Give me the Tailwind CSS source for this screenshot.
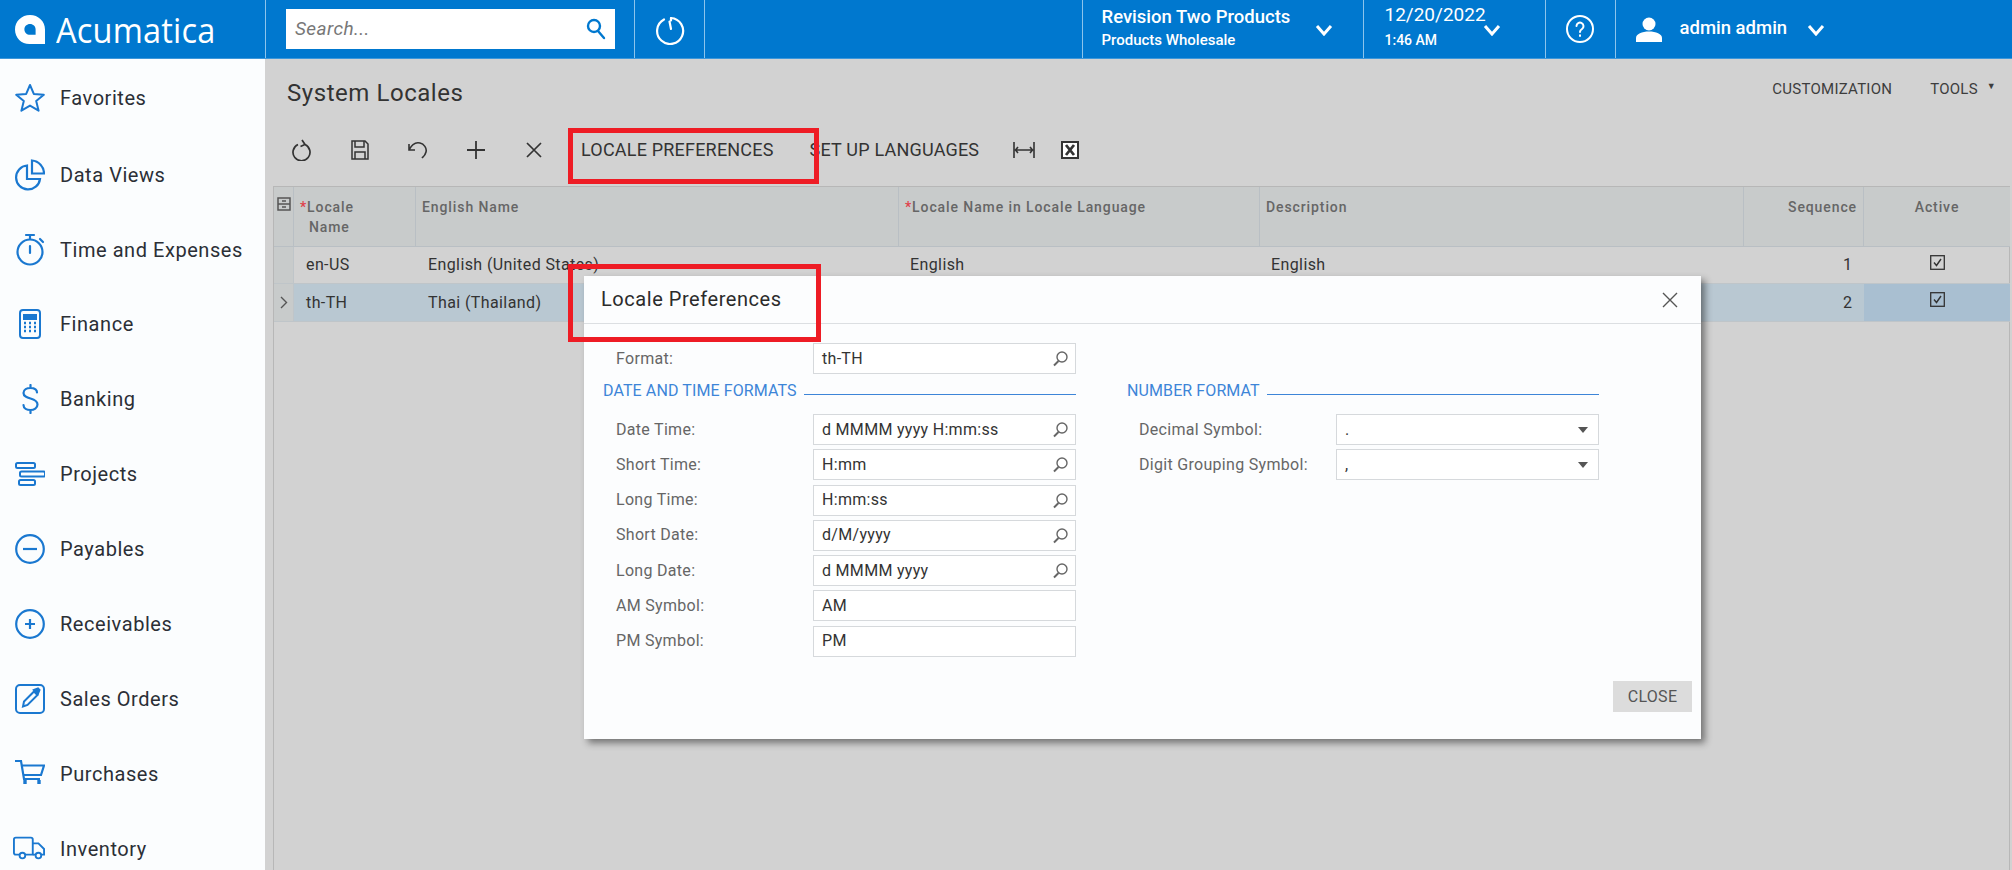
<!DOCTYPE html>
<html><head><meta charset="utf-8"><script src="https://cdn.jsdelivr.net/npm/@tailwindcss/browser@4"></script></head>
<body class="m-0 overflow-hidden">
<div class="relative w-[2012px] h-[870px] overflow-hidden flex flex-col bg-[#d2d2d2] font-['Roboto',sans-serif] text-[#333]">
  <!-- top bar -->
  <header class="h-[59px] shrink-0 flex bg-[#0078cf] text-white border-b border-[#3d97da]">
    <div class="w-[266px] shrink-0 flex items-center pl-[15px] gap-[11px] border-r border-[#8cc4ec]">
      <svg width="30" height="29" viewBox="0 0 30 29"><path fill="#fff" fill-rule="evenodd" d="M15 0C6.7 0 0 6.4 0 14.4 0 22.6 6.4 29 14.4 29H30V14.4C30 6.4 23.3 0 15 0Zm0 9c3.2 0 5.6 2.4 5.6 5.4v5.4h-5.6c-3.2 0-5.6-2.4-5.6-5.4S11.800 9 15 9Z"/></svg>
      <span class="text-[35px] leading-none tracking-[0.2px] font-['Open_Sans',sans-serif] scale-x-[0.93] origin-left">Acumatica</span>
    </div>
    <div class="w-[369px] shrink-0 flex items-center pl-[20px] border-r border-[#8cc4ec]">
      <div class="w-[329px] h-[40px] bg-white flex items-center justify-between px-[9px] text-[#777]">
        <span class="italic text-[19px] tracking-[0.4px]">Search...</span>
        <svg width="20" height="22" viewBox="0 0 20 22" fill="none" stroke="#0078cf" stroke-width="2.400"><circle cx="8" cy="8" r="6"/><path d="m12 13 6 7" stroke-linecap="round"/></svg>
      </div>
    </div>
    <div class="w-[70px] shrink-0 flex items-center justify-center border-r border-[#8cc4ec]">
      <svg width="32" height="32" viewBox="0 0 32 32" fill="none" stroke="#fff" stroke-width="2.200" stroke-linecap="round"><path d="M10 6.500a13 13 0 1 0 7-1.500"/><path d="M17 5v2.500M15.500 8.500 17 16"/></svg>
    </div>
    <div class="flex-1 border-r border-[#8cc4ec]"></div>
    <div class="w-[281px] shrink-0 flex items-center pl-[19px] border-r border-[#8cc4ec]">
      <div class="w-[202px] flex flex-col">
        <span class="text-[18.500px] leading-[22px] -mt-[3px] font-medium whitespace-nowrap">Revision Two Products</span>
        <span class="text-[15px] leading-[20px] mt-[2px] font-medium whitespace-nowrap">Products Wholesale</span>
      </div>
      <svg class="ml-[11px] mt-[2px]" width="18" height="12" viewBox="0 0 18 12" fill="none" stroke="#fff" stroke-width="3"><path d="m2 2 7 8 7-8"/></svg>
    </div>
    <div class="w-[182px] shrink-0 flex items-center pl-[21px] border-r border-[#8cc4ec]">
      <div class="w-[93px] flex flex-col">
        <span class="text-[19px] leading-[22px] -mt-[6px] whitespace-nowrap">12/20/2022</span>
        <span class="text-[14px] leading-[18px] mt-[5px] font-medium whitespace-nowrap">1:46 AM</span>
      </div>
      <svg class="ml-[5px] mt-[2px]" width="18" height="12" viewBox="0 0 18 12" fill="none" stroke="#fff" stroke-width="3"><path d="m2 2 7 8 7-8"/></svg>
    </div>
    <div class="w-[70px] shrink-0 flex items-center justify-center border-r border-[#8cc4ec]">
      <svg width="30" height="30" viewBox="0 0 30 30" fill="none" stroke="#fff" stroke-width="2"><circle cx="15" cy="15" r="13"/><path d="M11.500 12a3.500 3.500 0 1 1 5.500 3c-1.300.9-2 1.500-2 3" stroke-linecap="round"/><path d="M15 20.500v2.200"/></svg>
    </div>
    <div class="flex-1 flex items-center pl-[20px]">
      <svg width="26" height="25" viewBox="0 0 26 25" fill="#fff"><circle cx="13" cy="7" r="6.500"/><path d="M0 25v-4c0-4 6-6.500 13-6.500S26 17 26 21v4Z"/></svg>
      <span class="ml-[18px] text-[18.500px] font-medium whitespace-nowrap">admin admin</span>
      <svg class="ml-[20px] mt-[2px]" width="18" height="12" viewBox="0 0 18 12" fill="none" stroke="#fff" stroke-width="3"><path d="m2 2 7 8 7-8"/></svg>
    </div>
  </header>
  <div class="flex-1 flex min-h-0">
    <!-- sidebar -->
    <aside class="w-[265px] shrink-0 bg-[#fbfdfe] flex flex-col text-[20px] tracking-[0.55px] text-[#2b2f36] overflow-hidden">
      <div class="h-[77px] shrink-0 flex items-center pl-[15px] gap-[15px]"><svg class="w-[30px] h-[30px]" viewBox="0 0 30 30" fill="none" stroke="#1a78d0" stroke-width="2" stroke-linejoin="round"><path d="m15 2 3.800 8.900 10 .9-7.600 6.300 2.400 9.600L15 22.600l-8.600 5.100 2.400-9.600-7.600-6.300 10-.9Z"/></svg><span>Favorites</span></div>
      <div class="h-[77px] shrink-0 flex items-center pl-[15px] gap-[15px]"><svg class="w-[30px] h-[32px]" viewBox="0 0 30 32" fill="none" stroke="#1a78d0" stroke-width="2.200"><path d="M12 6.500A12 12 0 1 0 25 20H12Z"/><path d="M17 1.500v13h12A13 13 0 0 0 17 1.500Z"/></svg><span>Data Views</span></div>
      <div class="h-[73px] shrink-0 flex items-center pl-[15px] gap-[15px]"><svg class="w-[30px] h-[33px]" viewBox="0 0 30 33" fill="none" stroke="#1a78d0" stroke-width="2.200" stroke-linecap="round"><circle cx="15" cy="19" r="12.500"/><path d="M11 2h8M15 2v4M25 6l3 3M15 13v7"/></svg><span>Time and Expenses</span></div>
      <div class="h-[75px] shrink-0 flex items-center pl-[15px] gap-[15px]"><svg class="w-[30px] h-[30px]" viewBox="0 0 30 30" fill="none" stroke="#1a78d0" stroke-width="2"><rect x="5" y="1" width="20" height="28" rx="3"/><path d="M9 6h12v4H9z" fill="#1a78d0"/><path d="M9 14h2M14 14h2M19 14h2M9 18h2M14 18h2M19 18h2M9 22h2M14 22h2M19 22h2" stroke-width="2.400"/></svg><span>Finance</span></div>
      <div class="h-[75px] shrink-0 flex items-center pl-[15px] gap-[15px]"><svg class="w-[30px] h-[30px]" viewBox="0 0 30 30" fill="none" stroke="#1a78d0" stroke-width="2.200" stroke-linecap="round"><path d="M22 8.500C22 5.500 19 4 15.500 4S8.500 5.500 8.500 9s3.500 4.500 7 5.500 7 2.500 7 6-3.500 5.500-7 5.500-7-1.500-7-5M15.500 1v3M15.500 26v3"/></svg><span>Banking</span></div>
      <div class="h-[75px] shrink-0 flex items-center pl-[15px] gap-[15px]"><svg class="w-[30px] h-[26px]" viewBox="0 0 30 26" fill="none" stroke="#1a78d0" stroke-width="2"><rect x="1" y="2" width="19" height="5" rx="1.500"/><rect x="5" y="10.500" width="25" height="5" rx="1.500"/><rect x="4" y="19" width="16" height="5" rx="1.500"/></svg><span>Projects</span></div>
      <div class="h-[75px] shrink-0 flex items-center pl-[15px] gap-[15px]"><svg class="w-[30px] h-[30px]" viewBox="0 0 30 30" fill="none" stroke="#1a78d0" stroke-width="2.200"><circle cx="15" cy="15" r="13.800"/><path d="M8 15h14"/></svg><span>Payables</span></div>
      <div class="h-[75px] shrink-0 flex items-center pl-[15px] gap-[15px]"><svg class="w-[30px] h-[30px]" viewBox="0 0 30 30" fill="none" stroke="#1a78d0" stroke-width="2.200"><circle cx="15" cy="15" r="13.800"/><path d="M10 15h10M15 10v10"/></svg><span>Receivables</span></div>
      <div class="h-[75px] shrink-0 flex items-center pl-[15px] gap-[15px]"><svg class="w-[30px] h-[30px]" viewBox="0 0 30 30" fill="none" stroke="#1a78d0" stroke-width="2"><rect x="1" y="1" width="28" height="28" rx="4"/><path d="M8 22.500l1-5L19 7.500l3.500 3.500L12.500 21Z"/><path d="m19 6 4-1.500 1.500 1.500-1.500 3.500Z" fill="#1a78d0"/></svg><span>Sales Orders</span></div>
      <div class="h-[75px] shrink-0 flex items-center pl-[15px] gap-[15px]"><svg class="w-[30px] h-[30px]" viewBox="0 0 30 30" fill="none" stroke="#1a78d0" stroke-width="2.200"><path d="M0 2h6l3 18h16M7 6.500h22l-3 9.500H9"/><path d="M10 21v4M24 21v4" stroke-width="3.400"/></svg><span>Purchases</span></div>
      <div class="h-[75px] shrink-0 flex items-center pl-[13px] gap-[15px]"><svg class="w-[32px] h-[25px]" viewBox="0 0 34 25" fill="none" stroke="#1a78d0" stroke-width="2"><path d="M7 19H3a2 2 0 0 1-2-2V3a2 2 0 0 1 2-2h16a2 2 0 0 1 2 2v16H13"/><path d="M21 7h6l6 6v6h-3M24 19h-3"/><circle cx="10" cy="20" r="3"/><circle cx="27" cy="20" r="3"/></svg><span>Inventory</span></div>
    </aside>
    <!-- main -->
    <main class="flex-1 min-w-0 pl-[8px] pr-[2px] flex flex-col">
      <div class="h-[68px] shrink-0 flex justify-between pl-[14px] pr-[14px]">
        <h1 class="text-[24px] leading-[68px] tracking-[0.55px] font-normal">System Locales</h1>
        <div class="flex gap-[38px] text-[15px] tracking-[0.25px] pt-[19px] text-[#3d3d3d]"><span>CUSTOMIZATION</span><span class="flex gap-[9px]">TOOLS<span class="text-[9px] mt-[2px]">▼</span></span></div>
      </div>
      <div class="h-[46px] shrink-0 flex items-center text-[#333]">
        <div class="w-[58px] flex justify-center ml-[0px]"><svg width="20" height="22" viewBox="0 0 20 22" fill="none" stroke="#333" stroke-width="1.700"><path d="M6 5.500a8.500 8.500 0 1 0 7 0M10 1l3 4.500-4.500 2"/></svg></div>
        <div class="w-[58px] flex justify-center"><svg width="20" height="20" viewBox="0 0 20 20" fill="none" stroke="#333" stroke-width="1.500"><path d="M2 1h13l3 3v15H2Z"/><path d="M5 1v6h9V1M5 19v-7h10v7"/></svg></div>
        <div class="w-[58px] flex justify-center"><svg width="22" height="18" viewBox="0 0 22 18" fill="none" stroke="#333" stroke-width="1.600"><path d="M2 9c3-6 7-8 11-7s7 5 6 9-3 5-4 6M2 3v6h6"/></svg></div>
        <div class="w-[58px] flex justify-center"><svg width="20" height="20" viewBox="0 0 20 20" stroke="#333" stroke-width="1.800"><path d="M10 1v18M1 10h18"/></svg></div>
        <div class="w-[57px] flex justify-center"><svg width="16" height="16" viewBox="0 0 16 16" stroke="#333" stroke-width="1.700"><path d="m1 1 14 14M15 1 1 15"/></svg></div>
        <span class="ml-[19px] -mt-[1px] text-[18px] tracking-[0.2px] whitespace-nowrap">LOCALE PREFERENCES</span>
        <span class="ml-[36px] -mt-[1px] text-[18px] tracking-[0.2px] whitespace-nowrap">SET UP LANGUAGES</span>
        <svg class="ml-[34px]" width="22" height="16" viewBox="0 0 22 16" fill="none" stroke="#333" stroke-width="1.600"><path d="M1 0v16M21 0v16M3 8h16M5 5 2.500 8 5 11M17 5l2.500 3L17 11"/></svg>
        <svg class="ml-[26px]" width="18" height="18" viewBox="0 0 18 18"><rect x="1" y="1" width="16" height="16" fill="#fff" stroke="#333" stroke-width="2"/><path d="m5 4 8 10M13 4 5 14" stroke="#333" stroke-width="2.800"/></svg>
      </div>
      <div class="h-[13px] shrink-0"></div>
      <div class="flex-1 border border-[#b7b7b7] border-b-0 min-h-0">
        <div class="grid grid-cols-[20px_122px_483px_361px_484px_120px_146px] grid-rows-[60px_37px_38px] text-[#333]">
          <div class="bg-[#c8cbcb] border-r border-b border-[#b9bfc4] flex justify-center pt-[10px]"><svg width="14" height="14" viewBox="0 0 14 14" fill="none" stroke="#555" stroke-width="1.500"><rect x="1" y="1" width="12" height="12"/><path d="M1 7h12M5 4h4M5 10h4"/></svg></div>
          <div class="bg-[#c8cbcb] border-r border-b border-[#b9bfc4] pl-[6px] pt-[10px] text-[14px] leading-[20px] tracking-[0.9px] font-medium text-[#666]"><span class="text-[#e0404a]">*</span>Locale<br><span class="pl-[9px]">Name</span></div>
          <div class="bg-[#c8cbcb] border-r border-b border-[#b9bfc4] pl-[6px] pt-[10px] text-[14px] leading-[20px] tracking-[0.9px] font-medium text-[#666]">English Name</div>
          <div class="bg-[#c8cbcb] border-r border-b border-[#b9bfc4] pl-[6px] pt-[10px] text-[14px] leading-[20px] tracking-[0.9px] font-medium text-[#666]"><span class="text-[#e0404a]">*</span>Locale Name in Locale Language</div>
          <div class="bg-[#c8cbcb] border-r border-b border-[#b9bfc4] pl-[6px] pt-[10px] text-[14px] leading-[20px] tracking-[0.9px] font-medium text-[#666]">Description</div>
          <div class="bg-[#c8cbcb] border-r border-b border-[#b9bfc4] pr-[6px] pt-[10px] text-right text-[14px] leading-[20px] tracking-[0.9px] font-medium text-[#666]">Sequence</div>
          <div class="bg-[#c8cbcb] border-b border-[#b9bfc4] pt-[10px] text-center text-[14px] leading-[20px] tracking-[0.9px] font-medium text-[#666]">Active</div>

          <div class="bg-[#c8cbcb] border-r border-b border-[#bfc5c9]"></div>
          <div class="border-b border-[#bfc5c9] pl-[12px] flex items-center text-[16px] tracking-[0.4px]">en-US</div>
          <div class="border-b border-[#bfc5c9] pl-[12px] flex items-center text-[16px] tracking-[0.4px]">English (United States)</div>
          <div class="border-b border-[#bfc5c9] pl-[11px] flex items-center text-[16px] tracking-[0.4px]">English</div>
          <div class="border-b border-[#bfc5c9] pl-[11px] flex items-center text-[16px] tracking-[0.4px]">English</div>
          <div class="border-b border-[#bfc5c9] pr-[12px] flex items-center justify-end text-[16px]">1</div>
          <div class="border-b border-[#bfc5c9] pl-[66px] pt-[8px]"><svg width="15" height="15" viewBox="0 0 15 15" fill="none" stroke="#333"><rect x=".7" y=".7" width="13.600" height="13.600" stroke-width="1.300"/><path d="m4 7.500 2.500 3 4.500-6.500" stroke-width="1.400"/></svg></div>

          <div class="bg-[#c8cbcb] border-r border-b border-[#bfc5c9] flex items-center justify-center"><svg width="8" height="13" viewBox="0 0 8 13" fill="none" stroke="#555" stroke-width="1.400"><path d="m1 1 5.500 5.500L1 12"/></svg></div>
          <div class="bg-[#b9c8d2] border-b border-[#bfc5c9] pl-[12px] flex items-center text-[16px] tracking-[0.4px]">th-TH</div>
          <div class="bg-[#b9c8d2] border-b border-[#bfc5c9] pl-[12px] flex items-center text-[16px] tracking-[0.4px]">Thai (Thailand)</div>
          <div class="bg-[#b9c8d2] border-b border-[#bfc5c9]"></div>
          <div class="bg-[#b9c8d2] border-b border-[#bfc5c9]"></div>
          <div class="bg-[#b9c8d2] border-b border-[#bfc5c9] pr-[12px] flex items-center justify-end text-[16px]">2</div>
          <div class="bg-[#a9bfd1] border-b border-[#bfc5c9] pl-[66px] pt-[8px]"><svg width="15" height="15" viewBox="0 0 15 15" fill="none" stroke="#333"><rect x=".7" y=".7" width="13.600" height="13.600" stroke-width="1.300"/><path d="m4 7.500 2.500 3 4.500-6.500" stroke-width="1.400"/></svg></div>
        </div>
      </div>
    </main>
  </div>

  <!-- modal -->
  <section class="absolute left-[584px] top-[276px] w-[1117px] h-[463px] bg-[#fcfdfe] shadow-[4px_4px_7px_rgba(0,0,0,0.45)] flex flex-col">
    <div class="h-[48px] shrink-0 flex items-center justify-between border-b border-[#dcdfe2] pl-[17px] pr-[23px]">
      <span class="text-[20px] tracking-[0.55px] -mt-[1px] text-[#2b2b2b]">Locale Preferences</span>
      <svg width="16" height="16" viewBox="0 0 16 16" stroke="#555" stroke-width="1.400"><path d="m1 1 14 14M15 1 1 15"/></svg>
    </div>
    <div class="flex-1 relative min-h-0 text-[16px] tracking-[0.3px]">
      <div class="flex gap-[51px] pl-[19px] pt-[19px]">
        <div class="w-[473px] flex flex-col">
          <div class="flex items-center h-[31px] pl-[13px] text-[#666]"><span class="w-[197px]">Format:</span>
            <div class="w-[263px] h-[31px] border border-[#d6d9dc] bg-white flex items-center justify-between pl-[8px] pr-[6px] text-[#333]"><span>th-TH</span><svg width="17" height="17" viewBox="0 0 17 17" fill="none" stroke="#666" stroke-width="1.400"><circle cx="10" cy="7" r="5"/><path d="m6.500 11-4.500 4.500" stroke-width="2"/></svg></div></div>
          <div class="flex items-center gap-[7px] h-[40px] text-[#3d85d8]"><span class="whitespace-nowrap tracking-[0.1px] -mt-[7px]">DATE AND TIME FORMATS</span><div class="flex-1 h-px bg-[#3d85d8] mr-[0px] ml-[0px]"></div></div>
          <div class="flex flex-col gap-[4.300px]">
            <div class="flex items-center h-[31px] pl-[13px] text-[#666]"><span class="w-[197px]">Date Time:</span><div class="w-[263px] h-[31px] border border-[#d6d9dc] bg-white flex items-center justify-between pl-[8px] pr-[6px] text-[#333]"><span>d MMMM yyyy H:mm:ss</span><svg width="17" height="17" viewBox="0 0 17 17" fill="none" stroke="#666" stroke-width="1.400"><circle cx="10" cy="7" r="5"/><path d="m6.500 11-4.500 4.500" stroke-width="2"/></svg></div></div>
            <div class="flex items-center h-[31px] pl-[13px] text-[#666]"><span class="w-[197px]">Short Time:</span><div class="w-[263px] h-[31px] border border-[#d6d9dc] bg-white flex items-center justify-between pl-[8px] pr-[6px] text-[#333]"><span>H:mm</span><svg width="17" height="17" viewBox="0 0 17 17" fill="none" stroke="#666" stroke-width="1.400"><circle cx="10" cy="7" r="5"/><path d="m6.500 11-4.500 4.500" stroke-width="2"/></svg></div></div>
            <div class="flex items-center h-[31px] pl-[13px] text-[#666]"><span class="w-[197px]">Long Time:</span><div class="w-[263px] h-[31px] border border-[#d6d9dc] bg-white flex items-center justify-between pl-[8px] pr-[6px] text-[#333]"><span>H:mm:ss</span><svg width="17" height="17" viewBox="0 0 17 17" fill="none" stroke="#666" stroke-width="1.400"><circle cx="10" cy="7" r="5"/><path d="m6.500 11-4.500 4.500" stroke-width="2"/></svg></div></div>
            <div class="flex items-center h-[31px] pl-[13px] text-[#666]"><span class="w-[197px]">Short Date:</span><div class="w-[263px] h-[31px] border border-[#d6d9dc] bg-white flex items-center justify-between pl-[8px] pr-[6px] text-[#333]"><span>d/M/yyyy</span><svg width="17" height="17" viewBox="0 0 17 17" fill="none" stroke="#666" stroke-width="1.400"><circle cx="10" cy="7" r="5"/><path d="m6.500 11-4.500 4.500" stroke-width="2"/></svg></div></div>
            <div class="flex items-center h-[31px] pl-[13px] text-[#666]"><span class="w-[197px]">Long Date:</span><div class="w-[263px] h-[31px] border border-[#d6d9dc] bg-white flex items-center justify-between pl-[8px] pr-[6px] text-[#333]"><span>d MMMM yyyy</span><svg width="17" height="17" viewBox="0 0 17 17" fill="none" stroke="#666" stroke-width="1.400"><circle cx="10" cy="7" r="5"/><path d="m6.500 11-4.500 4.500" stroke-width="2"/></svg></div></div>
            <div class="flex items-center h-[31px] pl-[13px] text-[#666]"><span class="w-[197px]">AM Symbol:</span><div class="w-[263px] h-[31px] border border-[#d6d9dc] bg-white flex items-center pl-[8px] text-[#333]">AM</div></div>
            <div class="flex items-center h-[31px] pl-[13px] text-[#666]"><span class="w-[197px]">PM Symbol:</span><div class="w-[263px] h-[31px] border border-[#d6d9dc] bg-white flex items-center pl-[8px] text-[#333]">PM</div></div>
          </div>
        </div>
        <div class="w-[472px] flex flex-col">
          <div class="h-[31px]"></div>
          <div class="flex items-center gap-[7px] h-[40px] text-[#3d85d8]"><span class="whitespace-nowrap tracking-[0.1px] -mt-[7px]">NUMBER FORMAT</span><div class="flex-1 h-px bg-[#3d85d8]"></div></div>
          <div class="flex flex-col gap-[4.300px]">
            <div class="flex items-center h-[31px] pl-[12px] text-[#666]"><span class="w-[197px]">Decimal Symbol:</span><div class="w-[263px] h-[31px] border border-[#d6d9dc] bg-white flex items-center justify-between pl-[8px] pr-[10px] text-[#333]"><span>.</span><svg width="10" height="6" viewBox="0 0 10 6" fill="#555"><path d="M0 0h10L5 6Z"/></svg></div></div>
            <div class="flex items-center h-[31px] pl-[12px] text-[#666]"><span class="w-[197px] whitespace-nowrap">Digit Grouping Symbol:</span><div class="w-[263px] h-[31px] border border-[#d6d9dc] bg-white flex items-center justify-between pl-[8px] pr-[10px] text-[#333]"><span>,</span><svg width="10" height="6" viewBox="0 0 10 6" fill="#555"><path d="M0 0h10L5 6Z"/></svg></div></div>
          </div>
        </div>
      </div>
      <button class="absolute right-[9px] bottom-[27px] w-[79px] h-[31px] bg-[#dcdcdc] text-[#555] text-[16px] tracking-[0.3px]">CLOSE</button>
    </div>
  </section>

  <!-- red annotations -->
  <div class="absolute left-[568px] top-[128px] w-[251px] h-[56px] border-[5px] border-[#ee1c25]"></div>
  <div class="absolute left-[568px] top-[264px] w-[253px] h-[78px] border-[5px] border-[#ee1c25]"></div>
</div>
</body></html>
